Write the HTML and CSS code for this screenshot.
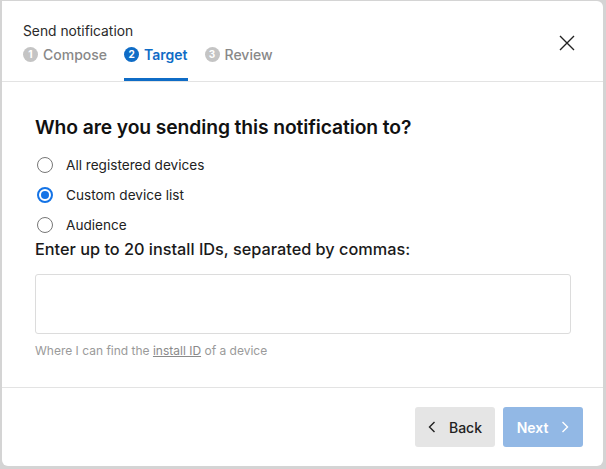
FILE: index.html
```html
<!DOCTYPE html>
<html>
<head>
<meta charset="utf-8">
<link rel="stylesheet" href="styles.css">
</head>
<body>
<div class="modal">
  <header class="head">
    <div class="head-left">
      <div class="title">Send notification</div>
      <nav class="steps">
        <div class="step"><span class="num">1</span>Compose</div>
        <div class="step active"><span class="num">2</span>Target</div>
        <div class="step"><span class="num">3</span>Review</div>
      </nav>
    </div>
    <button class="close" aria-label="Close">
      <svg width="16" height="16" viewBox="0 0 16 16"><path d="M1 1L15 15M15 1L1 15" stroke="#222" stroke-width="1.4" fill="none"/></svg>
    </button>
  </header>
  <main class="body">
    <h2 class="question">Who are you sending this notification to?</h2>
    <div class="options">
      <label class="opt"><span class="radio"></span>All registered devices</label>
      <label class="opt"><span class="radio on"></span>Custom device list</label>
      <label class="opt"><span class="radio"></span>Audience</label>
    </div>
    <div class="field-label">Enter up to 20 install IDs, separated by commas:</div>
    <div class="textarea"></div>
    <div class="help">Where I can find the <span class="link">install ID</span> of a device</div>
  </main>
  <footer class="foot">
    <button class="btn back">
      <svg width="8" height="12" viewBox="0 0 8 12"><path d="M6.5 1L1.5 6L6.5 11" stroke="#222" stroke-width="1.4" fill="none"/></svg>
      Back
    </button>
    <button class="btn next">
      Next
      <svg width="8" height="12" viewBox="0 0 8 12"><path d="M1.5 1L6.5 6L1.5 11" stroke="#fff" stroke-width="1.4" fill="none"/></svg>
    </button>
  </footer>
</div>
</body>
</html>
```
FILE: styles.css
```css
* { box-sizing: border-box; }
html, body { margin: 0; padding: 0; }
body {
  background: #d4d4d4;
  width: 606px;
  height: 469px;
  overflow: hidden;
  font-family: Inter, "Liberation Sans", sans-serif;
  color: #1f1f1f;
}
.modal {
  margin: 1px 0 0 2px;
  width: 601px;
  height: 465px;
  background: #fff;
  border-radius: 0 6px 6px 6px;
  display: flex;
  flex-direction: column;
}
.head {
  display: flex;
  justify-content: space-between;
  align-items: flex-start;
  padding: 0 28px 0 21px;
  border-bottom: 1px solid #e3e3e3;
  height: 81px;
}
.head-left { padding-top: 21px; }
.title {
  font-size: 13.8px;
  color: #2a2a2a;
  line-height: 18px;
}
.steps {
  display: flex;
  gap: 17px;
  margin-top: 4px;
}
.step {
  display: flex;
  align-items: center;
  gap: 5px;
  font-size: 14px;
  font-weight: 500;
  color: #888;
  height: 37px;
  padding-bottom: 14px;
  border-bottom: 3px solid transparent;
}
.step .num {
  width: 15px;
  height: 15px;
  border-radius: 50%;
  background: #c4c4c4;
  color: #fff;
  font-size: 10px;
  font-weight: 700;
  display: flex;
  align-items: center;
  justify-content: center;
}
.step.active {
  color: #0f6cc6;
  font-weight: 600;
  border-bottom-color: #0f6cc6;
}
.step.active .num { background: #0f6cc6; }
.close {
  margin-top: 34px;
  background: none;
  border: 0;
  padding: 0;
  width: 16px;
  height: 16px;
  display: flex;
}
.body {
  flex: 1;
  padding: 32px 33px 0 33px;
}
.question {
  margin: 0;
  font-size: 19.3px;
  font-weight: 600;
  line-height: 26px;
  color: #111;
  letter-spacing: -0.1px;
}
.options {
  margin-top: 16px;
  display: flex;
  flex-direction: column;
  gap: 12px;
}
.opt {
  display: flex;
  align-items: center;
  gap: 13px;
  font-size: 13.6px;
  line-height: 18px;
  color: #222;
  padding-left: 2px;
}
.radio {
  width: 16px;
  height: 16px;
  border-radius: 50%;
  border: 1px solid #777;
  background: #fff;
  position: relative;
}
.radio.on {
  border: 2px solid #1473e6;
}
.radio.on::after {
  content: "";
  position: absolute;
  left: 2px; top: 2px;
  width: 8px; height: 8px;
  border-radius: 50%;
  background: #1473e6;
}
.field-label {
  margin-top: 5px;
  font-size: 16.3px;
  font-weight: 500;
  line-height: 20px;
  color: #1a1a1a;
}
.textarea {
  margin-top: 15px;
  width: 536px;
  height: 60px;
  border: 1px solid #dcdcdc;
  border-radius: 3px;
}
.help {
  margin-top: 9px;
  font-size: 12px;
  color: #9a9a9a;
  line-height: 16px;
}
.help .link { text-decoration: underline; color: #8a8a8a; }
.foot {
  height: 79px;
  border-top: 1px solid #e3e3e3;
  display: flex;
  justify-content: flex-end;
  gap: 8px;
  padding: 19px 20px 0 0;
}
.btn {
  width: 80px;
  height: 40px;
  border: 0;
  border-radius: 3px;
  font-family: inherit;
  font-size: 14px;
  font-weight: 600;
  display: flex;
  align-items: center;
  justify-content: center;
  gap: 13px;
}
.back { background: #e5e5e5; color: #222; font-weight: 500; }
.next { background: #92b8e5; color: #fff; }
```
